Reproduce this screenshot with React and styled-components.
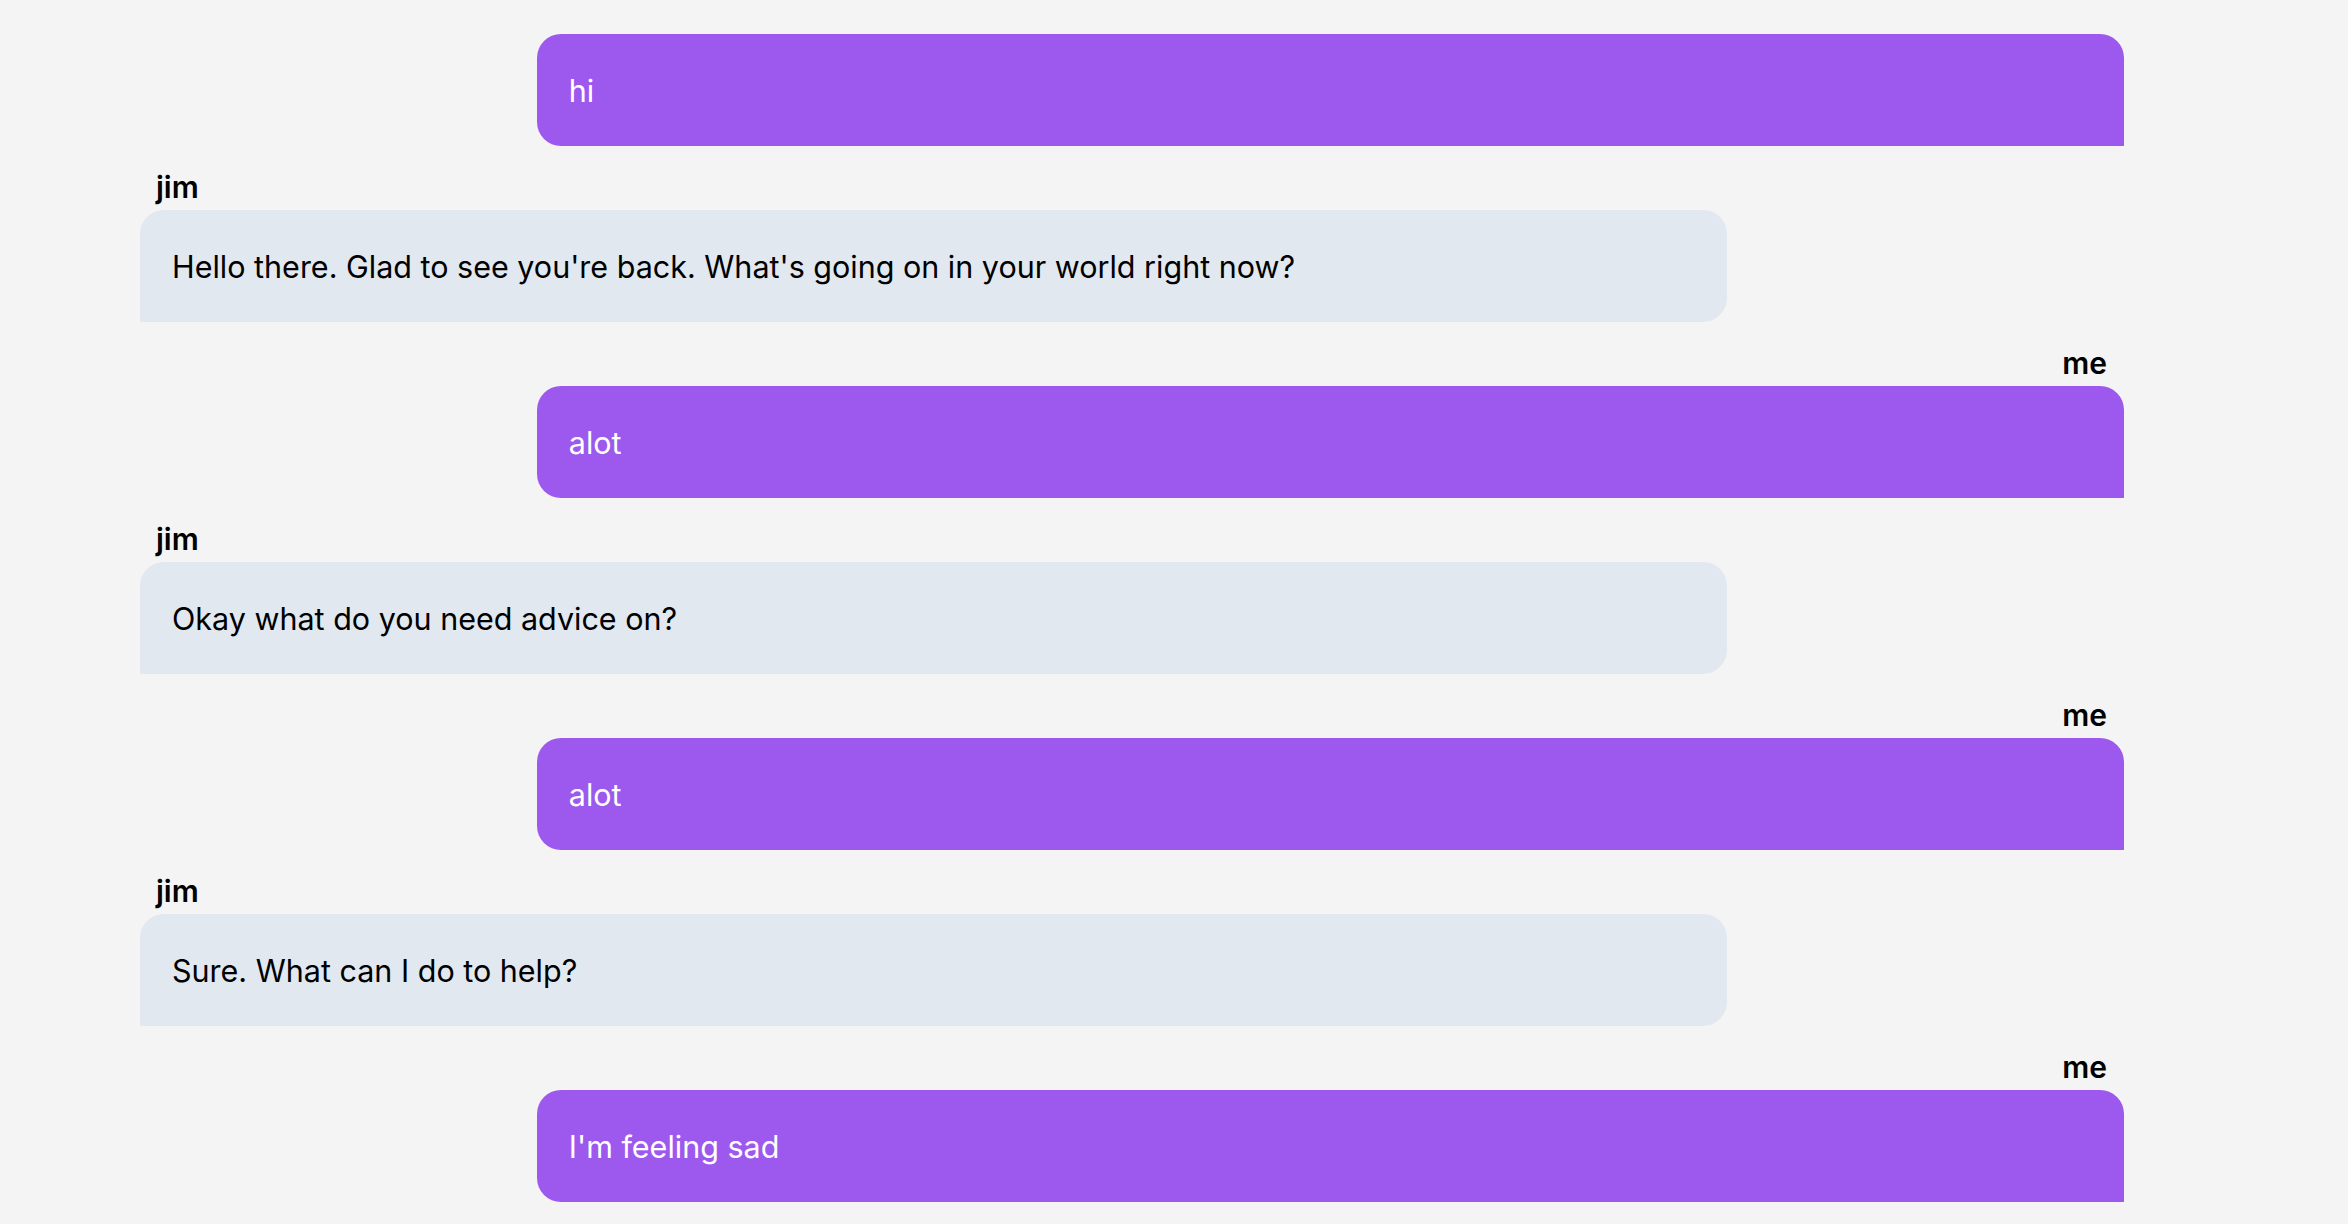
import React from "react";
import styled, { createGlobalStyle } from "styled-components";

const GlobalStyle = createGlobalStyle`
  html, body {
    margin: 0;
    padding: 0;
    background: #f4f4f4;
  }
  body {
    font-family: Inter, "Noto Sans", "Liberation Sans", sans-serif;
    color: #000;
  }
`;

const Page = styled.main`
  min-height: 1224px;
  padding: 34px 0 0 140px;
  box-sizing: border-box;
`;

const Thread = styled.div`
  width: 1984px;
  display: flex;
  flex-direction: column;
  gap: 23px;
`;

const Message = styled.div`
  display: flex;
  flex-direction: column;
  align-items: ${(p) => (p.$mine ? "flex-end" : "flex-start")};
`;

const Author = styled.div`
  font-size: 30px;
  line-height: 36px;
  font-weight: 600;
  margin-bottom: 5px;
  padding: ${(p) => (p.$mine ? "0 17px 0 0" : "0 0 0 16px")};
`;

const Bubble = styled.div`
  width: 80%;
  box-sizing: border-box;
  padding: 34px 32px 32px;
  font-size: 30.5px;
  line-height: 46px;
  background: ${(p) => (p.$mine ? "#9d58ee" : "#e2e8f0")};
  color: ${(p) => (p.$mine ? "#fff" : "#000")};
  border-radius: ${(p) => (p.$mine ? "24px 24px 0 24px" : "24px 24px 24px 0")};
`;

const messages = [
  { from: "me", text: "hi", hideAuthor: true },
  { from: "jim", text: "Hello there. Glad to see you're back. What's going on in your world right now?" },
  { from: "me", text: "alot" },
  { from: "jim", text: "Okay what do you need advice on?" },
  { from: "me", text: "alot" },
  { from: "jim", text: "Sure. What can I do to help?" },
  { from: "me", text: "I'm feeling sad" },
];

export default function App() {
  return (
    <>
      <GlobalStyle />
      <Page>
        <Thread>
          {messages.map((m, i) => {
            const mine = m.from === "me";
            return (
              <Message key={i} $mine={mine}>
                {!m.hideAuthor && <Author $mine={mine}>{m.from}</Author>}
                <Bubble $mine={mine}>{m.text}</Bubble>
              </Message>
            );
          })}
        </Thread>
      </Page>
    </>
  );
}
